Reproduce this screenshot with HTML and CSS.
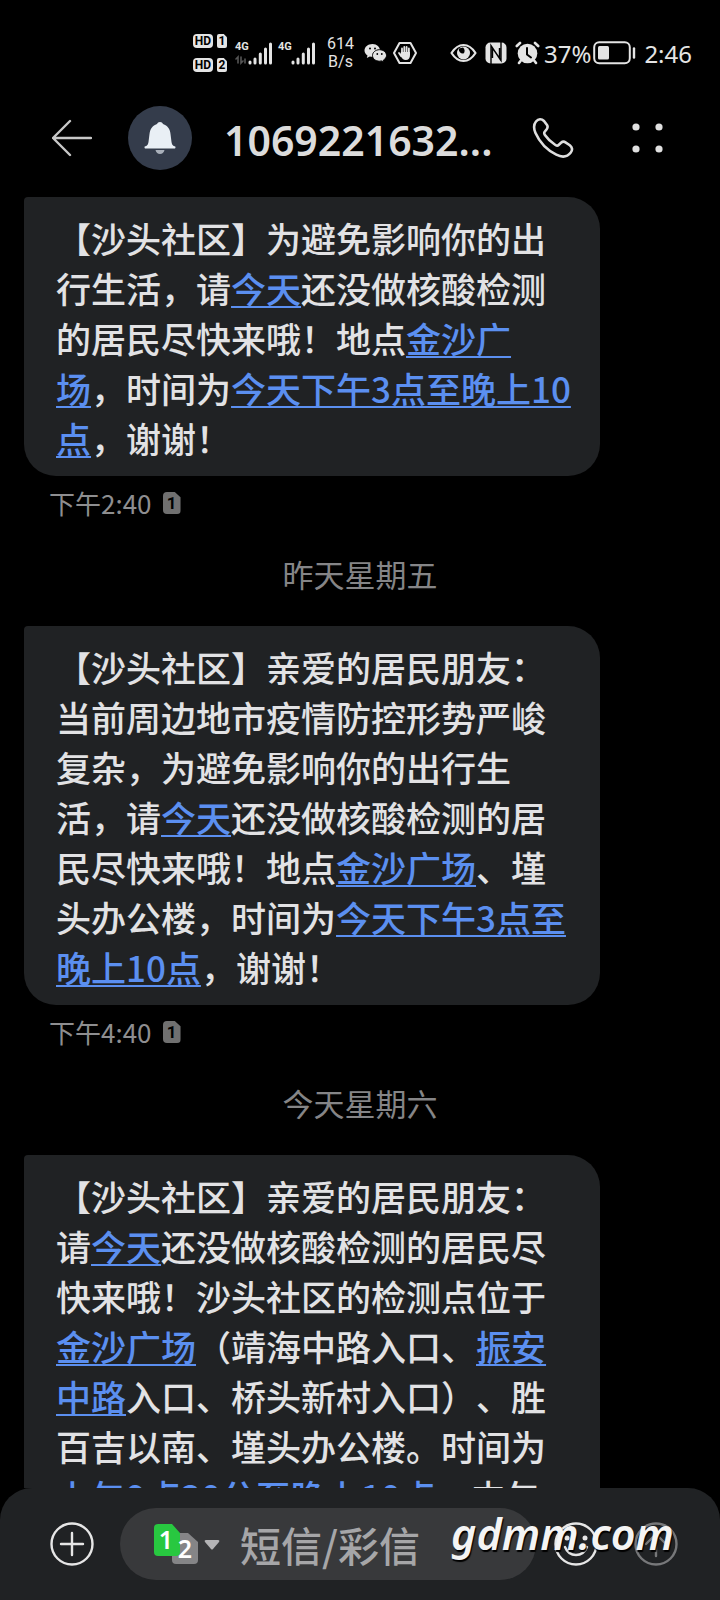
FILE: index.html
```html
<!DOCTYPE html>
<html lang="zh-CN">
<head>
<meta charset="utf-8">
<meta name="viewport" content="width=device-width, initial-scale=1">
<title>短信</title>
<link rel="stylesheet" href="styles.css">
</head>
<body>
<div class="phone">
  <div class="status">
    <div class="hd-list">
      <div class="hd-row"><span class="hd">HD</span><span class="sim sim-small">1</span></div>
      <div class="hd-row"><span class="hd">HD</span><span class="sim sim-small">2</span></div>
    </div>
    <div class="signal">
      <span class="net">4G</span>
      <svg width="37" height="24" viewBox="0 0 37 24" fill="none" stroke="#e4e4e4" stroke-width="3" stroke-linecap="round"><path d="M15 22v-1M20 22v-4M25.300 22v-9M30.500 22V8M35.500 22V3"/><path stroke="#555" stroke-width="1.600" d="M3 22v-6l-2 2M6 16v6l2-2M10 18v4"/></svg>
    </div>
    <div class="signal">
      <span class="net">4G</span>
      <svg width="37" height="24" viewBox="0 0 37 24" fill="none" stroke="#e4e4e4" stroke-width="3" stroke-linecap="round"><path d="M15 22v-1M20 22v-4M25.300 22v-9M30.500 22V8M35.500 22V3"/></svg>
    </div>
    <div class="speed"><span>614</span><span>B/s</span></div>
    <svg class="i-wechat" width="23" height="20" viewBox="0 0 23 20"><path fill="#e4e4e4" d="M8.500 1C4 1 .5 3.900.5 7.500c0 2 1.200 3.900 3 5L2.800 15l3-1.500c.9.2 1.800.3 2.700.3C13 13.800 16 11 16 7.500S13 1 8.500 1z"/><path fill="#e4e4e4" stroke="#000" stroke-width="1" d="M15.500 6.700c-3.900 0-7 2.600-7 5.800s3.100 5.700 7 5.700c.8 0 1.500-.1 2.200-.3L20 19l-.5-2c1.800-1 3-2.700 3-4.500 0-3.200-3.100-5.800-7-5.800z"/><g><circle cx="6" cy="5.500" r="1"/><circle cx="11" cy="5.500" r="1"/><circle cx="13.300" cy="11" r=".9"/><circle cx="17.800" cy="11" r=".9"/></g></svg>
    <svg class="i-hand" width="24" height="24" viewBox="0 0 24 24"><path fill="none" stroke="#e4e4e4" stroke-width="2" stroke-linejoin="round" d="M6.500 2h11L23 12l-5.500 10h-11L1 12z"/><path fill="none" stroke="#e4e4e4" stroke-width="1.800" stroke-linecap="round" d="M9 13V7.500M11.300 12V6M13.600 12V6M15.900 13V7.500M8 15l-2-3"/><path fill="#e4e4e4" d="M8 11h9v3c0 3-1.500 5-4.200 5C10 19 9 17.500 7 14z"/></svg>
    <svg class="i-eye" width="27" height="20" viewBox="0 0 27 20"><path fill="none" stroke="#e4e4e4" stroke-width="2.200" stroke-linejoin="round" d="M1.500 10C5 4.500 9 2 13.500 2S22 4.500 25.500 10C22 15.500 18 18 13.500 18S5 15.500 1.500 10z"/><circle cx="13.500" cy="10" r="6.500" fill="#e4e4e4"/><path d="M9 5.500a4 4 0 0 0 4.500 5A4 4 0 0 0 13 4.500" fill="#000"/></svg>
    <svg class="i-nfc" width="22" height="22" viewBox="0 0 22 22"><rect x=".5" y=".5" width="21" height="21" rx="5" fill="#e4e4e4"/><path fill="none" stroke="#000" stroke-width="1.400" d="M6 22V3.500l8.500 13V6M7.500 5.500V16M16 0v18.500L7.500 6"/></svg>
    <svg class="i-alarm" width="25" height="24" viewBox="0 0 25 24"><circle cx="12.500" cy="12.500" r="9.800" fill="#e4e4e4"/><path fill="none" stroke="#e4e4e4" stroke-width="2.600" stroke-linecap="round" d="M1.800 5 5 2M23.200 5 20 2M5.500 20 4 22M19.500 20l1.500 2"/><path fill="none" stroke="#000" stroke-width="2" stroke-linecap="round" stroke-linejoin="round" d="M12 7v6.500l4 3"/></svg>
    <span class="status-text">37%</span>
    <svg class="i-battery" width="43" height="24" viewBox="0 0 43 24"><rect x="1.200" y="1.200" width="35.600" height="21" rx="5" fill="none" stroke="#e4e4e4" stroke-width="2"/><rect x="5" y="5" width="11" height="13.500" rx="1.500" fill="#e4e4e4"/><path stroke="#e4e4e4" stroke-width="2.400" stroke-linecap="round" d="M41 7.500v9"/></svg>
    <span class="status-text">2:46</span>
  </div>

  <header class="header">
    <button class="icon-button" aria-label="返回"><svg width="40" height="38" viewBox="0 0 40 38" fill="none" stroke="#c8c8c8" stroke-width="2.400" stroke-linecap="round" stroke-linejoin="round"><path d="M39 19H1M18 2 1 19l17 17"/></svg></button>
    <span class="avatar"><svg width="32" height="34" viewBox="0 0 32 34"><path fill="#e9eff5" d="M16 1c1.500 0 2.500.8 3 2 4.500 1.500 7 5 7.500 10l1 8c.3 2 .9 3 2.200 4 1.600.2 1.800.6 1.800 1.300 0 .8-.4 1.200-1.200 1.200H1.700c-.8 0-1.200-.4-1.200-1.200 0-.7.200-1.100 1.800-1.300 1.300-1 1.900-2 2.200-4l1-8C6 8 8.500 4.500 13 3c.5-1.200 1.500-2 3-2z"/><path fill="#a9b0ba" d="M11.500 29h9c-.6 2.500-2.300 4-4.500 4s-3.900-1.500-4.500-4z"/></svg></span>
    <h1 class="title">1069221632...</h1>
    <button class="icon-button call" aria-label="拨打电话"><svg width="42" height="42" viewBox="0 0 42 42" fill="none" stroke="#dedede" stroke-width="2.600" stroke-linejoin="round"><path d="M4 4.500C6.500 1.500 9.500 1.500 12 4l3 4c1 1.500.8 2.700-.3 4.200l-2 2.600c-.8 1-.6 2 .2 3.200 2.500 3.700 6.300 7.300 10.500 10 1.300.8 2.300.9 3.200 0l2.400-2.200c1.500-1.300 3-1.500 4.500-.5l4.300 3c2.500 2 3 4.700 1 7.200-3.500 4.500-9 5-14.500 2.200C15 33 7.500 25 3.500 16 1.600 11.500 1.500 7.500 4 4.500z"/></svg></button>
    <button class="icon-button" aria-label="更多"><svg width="32" height="32" viewBox="0 0 32 32" fill="#e0e0e0"><circle cx="4" cy="5" r="3.600"/><circle cx="27" cy="5" r="3.600"/><circle cx="4" cy="27" r="3.600"/><circle cx="27" cy="27" r="3.600"/></svg></button>
  </header>

  <main class="thread">
    <article class="message">
      <p class="bubble">【沙头社区】为避免影响你的出<br>行生活，请<a href="#">今天</a>还没做核酸检测<br>的居民尽快来哦！地点<a href="#">金沙广<br>场</a>，时间为<a href="#">今天下午3点至晚上10<br>点</a>，谢谢！</p>
      <div class="meta"><time>下午2:40</time><span class="sim">1</span></div>
    </article>
    <p class="date">昨天星期五</p>
    <article class="message">
      <p class="bubble">【沙头社区】亲爱的居民朋友：<br>当前周边地市疫情防控形势严峻<br>复杂，为避免影响你的出行生<br>活，请<a href="#">今天</a>还没做核酸检测的居<br>民尽快来哦！地点<a href="#">金沙广场</a>、墐<br>头办公楼，时间为<a href="#">今天下午3点至<br>晚上10点</a>，谢谢！</p>
      <div class="meta"><time>下午4:40</time><span class="sim">1</span></div>
    </article>
    <p class="date">今天星期六</p>
    <article class="message">
      <p class="bubble">【沙头社区】亲爱的居民朋友：<br>请<a href="#">今天</a>还没做核酸检测的居民尽<br>快来哦！沙头社区的检测点位于<br><a href="#">金沙广场</a>（靖海中路入口、<a href="#">振安<br>中路</a>入口、桥头新村入口）、胜<br>百吉以南、墐头办公楼。时间为<br><a href="#">上午9点30分至晚上10点</a>，中午</p>
    </article>
  </main>

  <footer class="composer">
    <button class="icon-button" aria-label="添加"><svg width="44" height="44" viewBox="0 0 44 44" fill="none" stroke="#e6e6e6" stroke-width="2.400" stroke-linecap="round"><circle cx="22" cy="22" r="20.500"/><path d="M22 11v22M11 22h22"/></svg></button>
    <div class="field">
      <button class="sim-switch" aria-label="切换SIM卡">
        <svg width="66" height="42" viewBox="0 0 66 42"><path fill="#858587" d="M22 10h12l10 9v18q0 4-4 4H22q-4 0-4-4V14q0-4 4-4z"/><path fill="#28c840" d="M4 1h14l8 9v19q0 4-4 4H4q-4 0-4-4V5q0-4 4-4z"/><path fill="#b4b4b6" d="M52 17h12q2 0 1 2l-6 7q-1 1-2 0l-6-7q-1-2 1-2z"/><text class="sim-digit" x="12" y="26">1</text><text class="sim-digit" x="31" y="35">2</text></svg>
      </button>
      <input class="input" type="text" placeholder="短信/彩信" aria-label="短信/彩信">
    </div>
    <button class="icon-button" aria-label="表情"><svg width="44" height="44" viewBox="0 0 44 44" fill="none" stroke="#e6e6e6" stroke-width="2.400" stroke-linecap="round"><circle cx="22" cy="22" r="20.500"/><path d="M11 25c2 5 6 8 11 8s9-3 11-8"/><g fill="#e6e6e6" stroke="none"><circle cx="13" cy="16" r="2.500"/><circle cx="31" cy="16" r="2.500"/></g></svg></button>
    <button class="icon-button" aria-label="发送"><svg width="44" height="44" viewBox="0 0 44 44" fill="none" stroke="#77787a" stroke-width="2.400" stroke-linecap="round" stroke-linejoin="round"><circle cx="22" cy="22" r="20.500"/><path d="M22 34V12M12 22l10-10 10 10"/></svg></button>
    <span class="watermark">gdmm.com</span>
  </footer>
</div>
</body>
</html>
```

FILE: styles.css
```css
* { box-sizing: border-box; }

body {
  margin: 0;
  background: #000;
  color: #e2e2e4;
  font-family: "Noto Sans CJK SC", sans-serif;
}

p, h1 { margin: 0; font-weight: 400; }

svg { display: block; flex: none; }

button {
  margin: 0;
  padding: 0;
  border: 0;
  background: none;
  flex: none;
}

.phone {
  display: flex;
  flex-direction: column;
  height: 100vh;
  overflow: hidden;
}

/* Status bar */
.status {
  display: flex;
  align-items: center;
  justify-content: flex-end;
  flex: none;
  height: 106px;
  padding-right: 28px;
  color: #e4e4e4;
}

.hd-list { display: grid; gap: 10px; margin-right: 8px; }
.hd-row { display: flex; gap: 4px; }

.hd {
  width: 20px;
  height: 14px;
  border-radius: 4px;
  background: #e4e4e4;
  color: #000;
  font: 700 12px/14px Roboto, sans-serif;
  text-align: center;
}

.sim {
  width: 18px;
  height: 22px;
  border-radius: 4px;
  background: #707070;
  clip-path: polygon(0 0, 68% 0, 100% 24%, 100% 100%, 0 100%);
  color: #000;
  font: 700 17px/22px Roboto, sans-serif;
  text-align: center;
}

.sim-small {
  width: 10px;
  height: 14px;
  border-radius: 2px;
  background: #e4e4e4;
  font-size: 12px;
  line-height: 14px;
}

.signal { position: relative; margin-right: 6px; }

.net {
  position: absolute;
  left: 0;
  top: 0;
  font: 700 11px/12px Roboto, sans-serif;
}

.speed {
  display: grid;
  justify-items: center;
  margin: 0 10px 0 6px;
  font: 400 16px/18px Roboto, sans-serif;
}

.i-wechat { margin-right: 6px; }
.i-hand { margin-right: 33px; }
.i-eye { margin-right: 8px; }
.i-nfc { margin-right: 8px; }
.i-alarm { margin-right: 4px; }
.i-battery { margin: 0 8px 0 2px; }
.status-text { font: 400 24px/32px "Noto Sans", sans-serif; padding-top: 2px; }

/* Conversation header */
.header {
  display: flex;
  align-items: center;
  flex: none;
  height: 64px;
  padding: 0 56px 0 52px;
}

.avatar {
  display: grid;
  place-items: center;
  flex: none;
  width: 64px;
  height: 64px;
  margin: 0 32px 0 36px;
  border-radius: 50%;
  background: #343c4b;
}

.title {
  flex: 1;
  overflow: hidden;
  padding-top: 4px;
  color: #dcdcdc;
  font: 600 41px/56px "Noto Sans", sans-serif;
  white-space: nowrap;
}

.call { margin-right: 58px; }

/* Messages */
.thread {
  flex: 1;
  min-height: 0;
  overflow: hidden;
  padding: 27px 24px 0;
}

.bubble {
  width: 576px;
  max-width: 100%;
  padding: 16px 32px 13px;
  border-radius: 4px 32px 32px 32px;
  background: #202224;
  font-size: 35px;
  font-weight: 500;
  line-height: 50px;
  text-spacing-trim: space-all;
  white-space: nowrap;
}

.bubble a {
  color: #5b8ff0;
  text-decoration: underline;
  text-decoration-thickness: 2px;
  text-underline-offset: 3px;
  text-decoration-skip-ink: none;
}

.meta {
  display: flex;
  align-items: center;
  gap: 11px;
  height: 36px;
  margin: 9px 0 0 25px;
  color: #8e8e90;
  font-size: 26px;
  line-height: 36px;
}

.date {
  padding: 31px 0 30px;
  color: #858587;
  font-size: 31px;
  line-height: 44px;
  text-align: center;
}

/* Composer */
.composer {
  position: relative;
  display: flex;
  align-items: center;
  gap: 36px;
  flex: none;
  height: 112px;
  padding: 0 42px 0 50px;
  border-radius: 32px 32px 0 0;
  background: #202224;
}

.field {
  display: flex;
  align-items: center;
  gap: 20px;
  flex: 1;
  min-width: 0;
  height: 72px;
  margin: 0 -18px 0 -10px;
  padding: 0 24px 0 34px;
  border-radius: 36px;
  background: #38393b;
}

.sim-digit {
  fill: #fff;
  font: 600 25px "Noto Sans", sans-serif;
  text-anchor: middle;
}

.input {
  flex: 1;
  min-width: 0;
  height: 60px;
  padding: 0;
  border: 0;
  outline: 0;
  background: none;
  color: #e2e2e4;
  font: 500 41px/60px "Noto Sans CJK SC", sans-serif;
}

.input::placeholder { color: #a6a6a8; opacity: 1; }

.watermark {
  position: absolute;
  right: 46px;
  top: 18px;
  color: #f4f4f4;
  font: italic 600 43px/56px "Noto Sans", sans-serif;
  text-shadow: 1px 2px 1px #000;
  pointer-events: none;
}
```
